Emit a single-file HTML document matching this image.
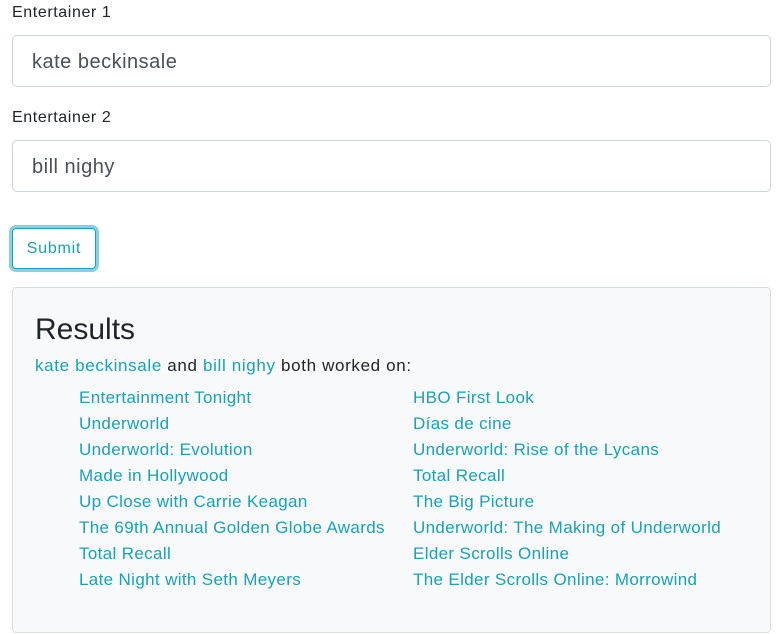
<!DOCTYPE html>
<html><head><style>
body{margin:0;background:#fff;font-family:"Liberation Sans",sans-serif;color:#212529;width:782px;height:634px;overflow:hidden;position:relative}
.lbl{position:absolute;left:12px;font-size:16px;letter-spacing:0.6px}
.inp{position:absolute;left:12px;width:759px;height:52px;border:1px solid #ced4da;border-radius:5px;box-sizing:border-box;font-size:20px;color:#495057;padding-left:19px;line-height:52px;letter-spacing:0.5px}
.btn{position:absolute;left:12px;top:228px;width:84px;height:41px;box-sizing:border-box;border:1px solid #17a2b8;border-radius:4px;box-shadow:0 0 0 3px rgba(23,162,184,.5);color:#17a2b8;font-size:16px;text-align:center;line-height:39px;letter-spacing:0.8px}
.box{position:absolute;left:12px;top:287px;width:759px;height:346px;box-sizing:border-box;background:#f8f9fa;border:1px solid #dadde0;border-radius:4px}
h2{position:absolute;left:22px;top:25px;margin:0;font-size:30px;font-weight:500;color:#212529}
.intro{position:absolute;left:22px;top:68px;font-size:17px;letter-spacing:0.65px}
a{color:#17a2b8;text-decoration:none}
.col{position:absolute;top:97px;font-size:17px;letter-spacing:0.35px;line-height:26px;color:#17a2b8}
</style></head><body>
<div class="lbl" style="top:4px">Entertainer 1</div>
<div class="inp" style="top:35px">kate beckinsale</div>
<div class="lbl" style="top:109px">Entertainer 2</div>
<div class="inp" style="top:140px">bill nighy</div>
<div class="btn">Submit</div>
<div class="box">
<h2>Results</h2>
<div class="intro"><a>kate beckinsale</a> and <a>bill nighy</a> both worked on:</div>
<div class="col" style="left:66px">Entertainment Tonight<br>Underworld<br>Underworld: Evolution<br>Made in Hollywood<br>Up Close with Carrie Keagan<br>The 69th Annual Golden Globe Awards<br>Total Recall<br>Late Night with Seth Meyers</div>
<div class="col" style="left:400px">HBO First Look<br>Días de cine<br>Underworld: Rise of the Lycans<br>Total Recall<br>The Big Picture<br>Underworld: The Making of Underworld<br>Elder Scrolls Online<br>The Elder Scrolls Online: Morrowind</div>
</div>
</body></html>
